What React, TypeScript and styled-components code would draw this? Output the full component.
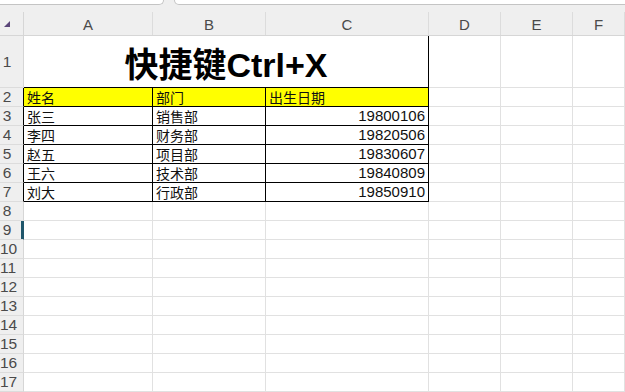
import styled, { createGlobalStyle } from 'styled-components';

const GlobalStyle = createGlobalStyle`
  html, body {
    margin: 0;
    padding: 0;
    background: #ffffff;
  }
  body {
    font-family: 'Liberation Sans', 'Noto Sans CJK SC', sans-serif;
  }
`;

const COLS = '24px 129px 113px 163px 72px 72px 1fr';

const people = [
  { name: '张三', dept: '销售部', birth: '19800106' },
  { name: '李四', dept: '财务部', birth: '19820506' },
  { name: '赵五', dept: '项目部', birth: '19830607' },
  { name: '王六', dept: '技术部', birth: '19840809' },
  { name: '刘大', dept: '行政部', birth: '19850910' },
];

function App() {
  const emptyRows = [8, 9, 10, 11, 12, 13, 14, 15, 16, 17];

  return (
    <Page>
      <GlobalStyle />
      <TopStrip>
        <Tab $width="172px" />
        <Tab />
      </TopStrip>

      <HeaderRow>
        <Corner>
          <Triangle />
        </Corner>
        {['A', 'B', 'C', 'D', 'E', 'F'].map((c) => (
          <ColLabel key={c}>{c}</ColLabel>
        ))}
      </HeaderRow>

      <Row $height={52}>
        <RowNum>
          <span>1</span>
        </RowNum>
        <TitleCell>快捷键Ctrl+X</TitleCell>
        <Cell />
        <Cell />
        <Cell />
      </Row>

      <Row $height={19}>
        <RowNum $edge>
          <span>2</span>
        </RowNum>
        <Cell $boxed $fill="#ffff00">姓名</Cell>
        <Cell $boxed $fill="#ffff00">部门</Cell>
        <Cell $boxed $fill="#ffff00">出生日期</Cell>
        <Cell />
        <Cell />
        <Cell />
      </Row>

      {people.map((p, i) => (
        <Row $height={19} key={p.name}>
          <RowNum $edge>
            <span>{i + 3}</span>
          </RowNum>
          <Cell $boxed>{p.name}</Cell>
          <Cell $boxed>{p.dept}</Cell>
          <Cell $boxed $num>
            {p.birth}
          </Cell>
          <Cell />
          <Cell />
          <Cell />
        </Row>
      ))}

      {emptyRows.map((n) => (
        <Row $height={19} key={n}>
          <RowNum $active={n === 9}>
            <span>{n}</span>
          </RowNum>
          <Cell />
          <Cell />
          <Cell />
          <Cell />
          <Cell />
          <Cell />
        </Row>
      ))}
    </Page>
  );
}

export default App;

const Page = styled.div`
  width: 625px;
  height: 392px;
  overflow: hidden;
  background: #ffffff;
`;

const TopStrip = styled.div`
  display: flex;
  gap: 10px;
  height: 12px;
  margin: 0 -12px 0 -10px;
  background: #efefef;
`;

const Tab = styled.div<{ $width?: string }>`
  flex: ${({ $width }) => ($width ? `0 0 ${$width}` : '1')};
  height: 4px;
  background: #ffffff;
  border: 1px solid #c4c4c4;
  border-top: none;
  border-radius: 0 0 6px 6px;
`;

const HeaderRow = styled.div`
  display: grid;
  grid-template-columns: ${COLS};
  height: 23px;
  background: #efefef;
  border-bottom: 1px solid #d6d6d6;
  box-sizing: content-box;
`;

const Corner = styled.div`
  position: relative;
  border-right: 1px solid #d6d6d6;
`;

const Triangle = styled.div`
  position: absolute;
  left: 4px;
  top: 9px;
  width: 0;
  height: 0;
  border-left: 6px solid transparent;
  border-bottom: 6px solid #5b4679;
`;

const ColLabel = styled.div`
  display: flex;
  align-items: center;
  justify-content: center;
  border-right: 1px solid #dcdcdc;
  font-size: 15px;
  color: #4a4a4a;
  padding-top: 1px;
`;

const Row = styled.div<{ $height: number }>`
  display: grid;
  grid-template-columns: ${COLS};
  height: ${({ $height }) => $height}px;
`;

const RowNum = styled.div<{ $edge?: boolean; $active?: boolean }>`
  display: flex;
  align-items: center;
  background: #efefef;
  border-right: 1px solid
    ${({ $edge, $active }) => ($edge ? '#000000' : $active ? '#1f566b' : '#d6d6d6')};
  box-shadow: ${({ $active }) => ($active ? 'inset -2px 0 0 #1f566b' : 'none')};
  border-bottom: 1px solid #dcdcdc;
  font-size: 15.5px;
  color: #4a4a4a;
  overflow: visible;

  span {
    width: 14px;
    text-align: center;
    white-space: nowrap;
  }
`;

const Cell = styled.div<{ $boxed?: boolean; $fill?: string; $num?: boolean }>`
  display: flex;
  align-items: flex-end;
  justify-content: ${({ $num }) => ($num ? 'flex-end' : 'flex-start')};
  padding: 0 3px 0 3px;
  background: ${({ $fill }) => $fill || '#ffffff'};
  border-right: 1px solid ${({ $boxed }) => ($boxed ? '#000000' : '#e1e1e1')};
  border-bottom: 1px solid ${({ $boxed }) => ($boxed ? '#000000' : '#e1e1e1')};
  font-family: ${({ $num }) =>
    $num ? "'Liberation Sans', sans-serif" : "'Noto Sans CJK SC', sans-serif"};
  font-size: ${({ $num }) => ($num ? '15px' : '14px')};
  line-height: 18px;
  color: #111111;
  white-space: nowrap;
  box-sizing: border-box;
`;

const TitleCell = styled.div`
  grid-column: span 3;
  display: flex;
  align-items: flex-end;
  justify-content: center;
  padding-bottom: 2px;
  border-right: 1px solid #000000;
  border-bottom: 1px solid #000000;
  font-family: 'Liberation Sans', 'Noto Sans CJK SC', sans-serif;
  font-weight: bold;
  font-size: 34px;
  line-height: 40px;
  color: #000000;
  box-sizing: border-box;
`;
